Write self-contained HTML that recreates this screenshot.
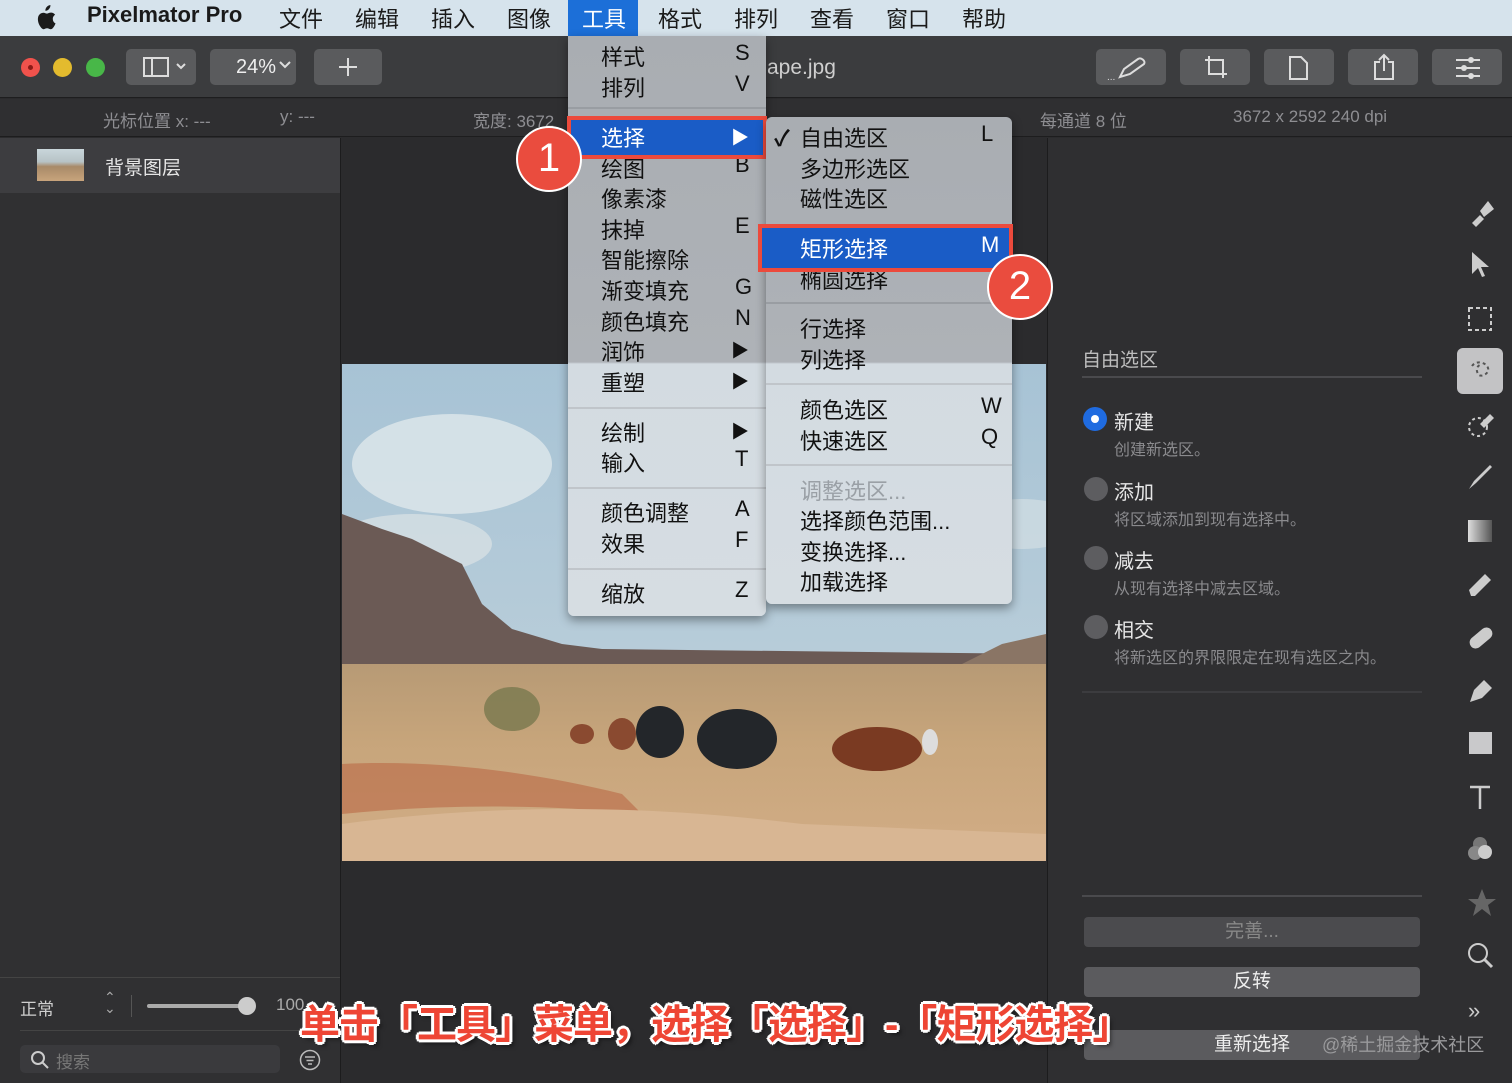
<!DOCTYPE html>
<html><head><meta charset="utf-8">
<style>
*{margin:0;padding:0;box-sizing:border-box}
body{width:1512px;height:1083px;overflow:hidden;background:#2b2b2d;font-family:"Liberation Sans","Noto Sans CJK SC",sans-serif;position:relative}
.a{position:absolute}
.t{position:absolute;white-space:nowrap}
.mb{font-size:22px;color:#1a1a1a;top:2px}
.btn{position:absolute;top:49px;height:36px;background:#5a5b5d;border-radius:5px}
.mi{position:absolute;font-size:22px;color:#111;white-space:nowrap}
.sep{position:absolute;height:2px;background:#c0c5ca}
.ti{position:absolute;left:1466px}
.rb{position:absolute;left:1084px;width:336px;height:30px;border-radius:4px;background:#5b5b5e;color:#eee;font-size:19px;text-align:center;line-height:30px}
.radio{position:absolute;left:1084px;width:24px;height:24px;border-radius:50%;background:#5d5d60}
.rl{position:absolute;left:1114px;font-size:20px;color:#e6e6e6}
.rd{position:absolute;left:1114px;font-size:16px;color:#8a8a8d}
</style></head><body>
<div class="a" style="left:0;top:0;width:1512px;height:36px;background:#d6e3ec"></div>
<svg class="a" style="left:33px;top:5px" width="24" height="26" viewBox="0 0 24 26"><path d="M16 4c1-1.2 1.6-2.6 1.4-4-1.3.1-2.8.9-3.700 2-.8.9-1.5 2.4-1.3 3.8 1.4.1 2.8-.7 3.6-1.8zM19.8 13.8c0-2.7 2.2-4 2.3-4.1-1.3-1.9-3.3-2.1-4-2.1-1.7-.2-3.3 1-4.2 1s-2.2-1-3.6-.9c-1.9 0-3.6 1.1-4.5 2.7-1.900 3.3-.5 8.3 1.4 11 .9 1.3 2 2.8 3.4 2.8 1.4-.1 1.9-.9 3.5-.9s2.1.9 3.6.9c1.5 0 2.4-1.4 3.3-2.7 1-1.5 1.5-3 1.5-3.1-.1 0-2.7-1-2.7-4.600z" fill="#1b1b1b"/></svg>
<div class="t mb" style="left:87px;font-weight:bold">Pixelmator Pro</div>
<div class="t mb" style="left:279px">文件</div>
<div class="t mb" style="left:355px">编辑</div>
<div class="t mb" style="left:431px">插入</div>
<div class="t mb" style="left:507px">图像</div>
<div class="a" style="left:568px;top:0;width:70px;height:36px;background:#1c6fd8"></div>
<div class="t mb" style="left:582px;color:#fff">工具</div>
<div class="t mb" style="left:658px">格式</div>
<div class="t mb" style="left:734px">排列</div>
<div class="t mb" style="left:810px">查看</div>
<div class="t mb" style="left:886px">窗口</div>
<div class="t mb" style="left:962px">帮助</div>
<div class="a" style="left:0;top:36px;width:1512px;height:62px;background:#3b3c3e;border-bottom:1px solid #1e1e1f"></div>
<div class="a" style="left:21px;top:58px;width:19px;height:19px;border-radius:50%;background:#f0524c"></div>
<div class="a" style="left:28px;top:65px;width:5px;height:5px;border-radius:50%;background:#8a1a16"></div>
<div class="a" style="left:53px;top:58px;width:19px;height:19px;border-radius:50%;background:#e3bb2e"></div>
<div class="a" style="left:86px;top:58px;width:19px;height:19px;border-radius:50%;background:#48b748"></div>
<div class="btn" style="left:126px;width:70px"></div>
<svg class="a" style="left:143px;top:57px" width="46" height="20"><rect x="1" y="1" width="24" height="18" fill="none" stroke="#ddd" stroke-width="2"/><line x1="9" y1="1" x2="9" y2="19" stroke="#ddd" stroke-width="2"/><path d="M34 7l4 4 4-4" fill="none" stroke="#ddd" stroke-width="2"/></svg>
<div class="btn" style="left:210px;width:86px"></div>
<div class="t" style="left:236px;top:56px;font-size:20px;color:#eee">24%</div>
<svg class="a" style="left:278px;top:60px" width="14" height="10"><path d="M2 2l5 5 5-5" fill="none" stroke="#ddd" stroke-width="2"/></svg>
<div class="btn" style="left:314px;width:68px"></div>
<svg class="a" style="left:338px;top:57px" width="20" height="20"><path d="M10 1v18M1 10h18" stroke="#ddd" stroke-width="2"/></svg>
<div class="t" style="left:767px;top:56px;font-size:21px;color:#cfcfcf">ape.jpg</div>
<div class="btn" style="left:1096px;width:70px"></div>
<svg class="a" style="left:1106px;top:53px" width="50" height="30"><path d="M14 24l4-8 14-10c3-2 8 2 6 5L24 21z" fill="none" stroke="#ddd" stroke-width="2"/><text x="1" y="27" fill="#ddd" font-size="10">...</text></svg>
<div class="btn" style="left:1180px;width:70px"></div>
<svg class="a" style="left:1200px;top:54px" width="30" height="28"><path d="M5 6h18v18M9 2v18h18" fill="none" stroke="#ddd" stroke-width="2"/></svg>
<div class="btn" style="left:1264px;width:70px"></div>
<svg class="a" style="left:1288px;top:55px" width="22" height="26"><path d="M2 2h11l6 6v16H2z" fill="none" stroke="#ddd" stroke-width="2"/></svg>
<div class="btn" style="left:1348px;width:70px"></div>
<svg class="a" style="left:1372px;top:52px" width="24" height="30"><path d="M8 10H3v17h18V10h-5M12 3v16M7 8l5-5 5 5" fill="none" stroke="#ddd" stroke-width="2"/></svg>
<div class="btn" style="left:1432px;width:70px"></div>
<svg class="a" style="left:1455px;top:56px" width="26" height="24"><path d="M1 4h24M1 12h24M1 20h24" stroke="#ddd" stroke-width="2"/><circle cx="16" cy="4" r="3" fill="#ddd"/><circle cx="9" cy="12" r="3" fill="#ddd"/><circle cx="16" cy="20" r="3" fill="#ddd"/></svg>
<div class="a" style="left:0;top:99px;width:1512px;height:38px;background:#2f2f31;border-bottom:1px solid #1d1d1e"></div>
<div class="t" style="left:103px;top:107px;font-size:17px;color:#8e8e92">光标位置 x: ---</div>
<div class="t" style="left:280px;top:107px;font-size:17px;color:#8e8e92">y: ---</div>
<div class="t" style="left:473px;top:107px;font-size:17px;color:#8e8e92">宽度: 3672</div>
<div class="t" style="left:1040px;top:107px;font-size:17px;color:#8e8e92">每通道 8 位</div>
<div class="t" style="left:1233px;top:107px;font-size:17px;color:#8e8e92">3672 x 2592 240 dpi</div>
<div class="a" style="left:0;top:138px;width:341px;height:945px;background:#303032;border-right:1px solid #1c1c1d"></div>
<div class="a" style="left:0;top:138px;width:340px;height:55px;background:#3d3d40"></div>
<div class="a" style="left:37px;top:149px;width:47px;height:32px;background:linear-gradient(#c9d6db 0,#b7c3c6 40%,#a88a68 55%,#c8a47c 100%)"></div>
<div class="t" style="left:105px;top:153px;font-size:19px;color:#e6e6e6">背景图层</div>
<div class="a" style="left:0;top:977px;width:340px;height:1px;background:#444"></div>
<div class="t" style="left:20px;top:995px;font-size:17px;color:#cfcfcf">正常</div>
<div class="t" style="left:104px;top:992px;font-size:14px;color:#aaa;line-height:11px">⌃<br>⌄</div>
<div class="a" style="left:131px;top:995px;width:1px;height:22px;background:#555"></div>
<div class="a" style="left:147px;top:1004px;width:100px;height:4px;border-radius:2px;background:#aaa"></div>
<div class="a" style="left:238px;top:997px;width:18px;height:18px;border-radius:50%;background:#ccc"></div>
<div class="t" style="left:276px;top:995px;font-size:17px;color:#aaa">100</div>
<div class="a" style="left:20px;top:1030px;width:320px;height:1px;background:#444"></div>
<div class="a" style="left:20px;top:1045px;width:260px;height:28px;border-radius:5px;background:#3a3a3d"></div>
<svg class="a" style="left:30px;top:1050px" width="20" height="20"><circle cx="8" cy="8" r="6" fill="none" stroke="#ccc" stroke-width="2"/><path d="M12 12l6 6" stroke="#ccc" stroke-width="2"/></svg>
<div class="t" style="left:56px;top:1048px;font-size:17px;color:#777">搜索</div>
<svg class="a" style="left:299px;top:1049px" width="22" height="22"><circle cx="11" cy="11" r="9.5" fill="none" stroke="#bbb" stroke-width="1.5"/><path d="M6 8h10M7.5 11.5h7M9 15h4" stroke="#bbb" stroke-width="1.5"/></svg>
<!-- canvas image -->
<div class="a" style="left:342px;top:364px;width:704px;height:497px;overflow:hidden">
<svg width="704" height="497">
<defs>
<linearGradient id="sky" x1="0" y1="0" x2="0" y2="1"><stop offset="0" stop-color="#a7c3d5"/><stop offset="1" stop-color="#c3d3dc"/></linearGradient>
<linearGradient id="gr" x1="0" y1="0" x2="0" y2="1"><stop offset="0" stop-color="#b79a75"/><stop offset=".4" stop-color="#c7a57b"/><stop offset="1" stop-color="#d2ad86"/></linearGradient>
</defs>
<rect width="704" height="497" fill="url(#sky)"/>
<ellipse cx="110" cy="100" rx="100" ry="50" fill="#e2e9ec" opacity=".75"/>
<ellipse cx="70" cy="180" rx="80" ry="30" fill="#dbe3e6" opacity=".7"/>
<ellipse cx="680" cy="160" rx="60" ry="25" fill="#d9e2e6" opacity=".6"/>
<path d="M0 150 L40 165 L70 175 L100 190 L120 200 L140 240 L170 265 L220 280 L260 285 L704 290 L704 320 L0 320Z" fill="#6b5a55"/>
<path d="M620 300 L660 280 L704 270 L704 320 L600 320Z" fill="#8a7565"/>
<rect x="0" y="300" width="704" height="197" fill="url(#gr)"/>
<path d="M0 400 C100 395 200 410 280 430 L300 450 C200 440 100 440 0 450Z" fill="#b8623f" opacity=".55"/>
<path d="M0 460 C150 440 300 440 460 460 L704 470 L704 497 L0 497Z" fill="#d8b693"/>
<ellipse cx="170" cy="345" rx="28" ry="22" fill="#7d7a50" opacity=".85"/>
<ellipse cx="240" cy="370" rx="12" ry="10" fill="#8a4a30"/>
<ellipse cx="280" cy="370" rx="14" ry="16" fill="#8a4a30"/>
<ellipse cx="318" cy="368" rx="24" ry="26" fill="#23262a"/>
<ellipse cx="395" cy="375" rx="40" ry="30" fill="#23262a"/>
<ellipse cx="535" cy="385" rx="45" ry="22" fill="#7a3a22"/>
<ellipse cx="588" cy="378" rx="8" ry="13" fill="#ddd"/>
</svg></div>
<!-- right panel -->
<div class="a" style="left:1047px;top:138px;width:465px;height:945px;background:#2f2f31;border-left:1px solid #1c1c1d"></div>
<div class="t" style="left:1082px;top:345px;font-size:19px;color:#bdbdbd">自由选区</div>
<div class="a" style="left:1082px;top:376px;width:340px;height:2px;background:#4a4a4d"></div>
<div class="radio" style="left:1083px;top:407px;background:#1f6be0"></div>
<div class="a" style="left:1091px;top:415px;width:8px;height:8px;border-radius:50%;background:#fff"></div>
<div class="rl" style="top:406px">新建</div>
<div class="rd" style="top:436px">创建新选区。</div>
<div class="radio" style="top:477px"></div>
<div class="rl" style="top:476px">添加</div>
<div class="rd" style="top:506px">将区域添加到现有选择中。</div>
<div class="radio" style="top:546px"></div>
<div class="rl" style="top:545px">减去</div>
<div class="rd" style="top:575px">从现有选择中减去区域。</div>
<div class="radio" style="top:615px"></div>
<div class="rl" style="top:614px">相交</div>
<div class="rd" style="top:644px">将新选区的界限限定在现有选区之内。</div>
<div class="a" style="left:1082px;top:691px;width:340px;height:2px;background:#3c3c3f"></div>
<div class="a" style="left:1082px;top:895px;width:340px;height:2px;background:#4a4a4d"></div>
<div class="rb" style="top:917px;background:#4b4b4e;color:#888">完善...</div>
<div class="rb" style="top:967px">反转</div>
<div class="rb" style="top:1030px">重新选择</div>
<div class="t" style="left:1322px;top:1031px;font-size:18px;color:#9a9a9c">@稀土掘金技术社区</div>
<!-- tools -->
<svg class="ti" style="top:197px" width="30" height="30"><path d="M6 26l8-8 4 4-8 8zM14 14l8-10 6 8-10 8z" fill="#ccc"/></svg>
<svg class="ti" style="top:250px" width="30" height="30"><path d="M6 2v22l6-6 4 9 3-1-4-9h8z" fill="#ccc"/></svg>
<svg class="ti" style="top:305px" width="30" height="30"><rect x="3" y="3" width="22" height="22" fill="none" stroke="#ccc" stroke-width="2" stroke-dasharray="4 3"/></svg>
<div class="a" style="left:1457px;top:348px;width:46px;height:46px;border-radius:6px;background:#c3c3c5"></div>
<svg class="ti" style="top:356px" width="30" height="30"><path d="M6 10c4-6 14-4 16 2s-8 10-10 6-2-8 4-10" fill="none" stroke="#555" stroke-width="2" stroke-dasharray="3 3"/></svg>
<svg class="ti" style="top:410px" width="30" height="30"><circle cx="12" cy="17" r="9" fill="none" stroke="#ccc" stroke-width="2" stroke-dasharray="3 3"/><path d="M14 14l10-10 4 4-10 10z" fill="#ccc"/></svg>
<svg class="ti" style="top:463px" width="30" height="30"><path d="M3 26l5-8 16-16 2 2-16 16z" fill="#ccc"/></svg>
<div class="a" style="left:1468px;top:520px;width:24px;height:22px;background:linear-gradient(90deg,#ddd,#555)"></div>
<svg class="ti" style="top:570px" width="30" height="30"><path d="M3 20l16-16 6 6-16 16H5z" fill="#ccc"/></svg>
<svg class="ti" style="top:623px" width="30" height="30"><rect x="2" y="9" width="26" height="12" rx="6" transform="rotate(-40 15 15)" fill="#ccc"/></svg>
<svg class="ti" style="top:676px" width="30" height="30"><path d="M4 26l4-12 10-10 8 8-10 10z" fill="#ccc"/></svg>
<div class="a" style="left:1469px;top:732px;width:23px;height:22px;background:#c9c9cb"></div>
<svg class="ti" style="top:783px" width="30" height="30"><path d="M4 4h20M14 4v22" stroke="#ccc" stroke-width="2.5"/></svg>
<svg class="ti" style="top:835px" width="32" height="32"><circle cx="14" cy="9" r="7" fill="#777"/><circle cx="9" cy="18" r="7" fill="#888"/><circle cx="19" cy="17" r="7" fill="#ccc"/></svg>
<svg class="ti" style="top:887px" width="32" height="32"><path d="M16 2l4 10h10l-8 6 3 11-9-7-9 7 3-11-8-6h10z" fill="#666"/></svg>
<svg class="ti" style="top:941px" width="30" height="30"><circle cx="12" cy="12" r="9" fill="none" stroke="#ccc" stroke-width="2"/><path d="M18 18l8 8" stroke="#ccc" stroke-width="3"/></svg>
<div class="t" style="left:1468px;top:998px;font-size:22px;color:#ccc">»</div>
<!-- menu 1 -->
<div class="a" style="left:568px;top:36px;width:198px;height:580px;border-radius:0 0 6px 6px;background:linear-gradient(#a9adb2 0,#aeb2b7 326px,#d3dbe1 328px,#d6dde2 100%);box-shadow:0 4px 10px rgba(0,0,0,.4)"></div>
<div class="mi" style="left:601px;top:40px">样式</div><div class="mi" style="left:735px;top:40px">S</div>
<div class="mi" style="left:601px;top:71px">排列</div><div class="mi" style="left:735px;top:71px">V</div>
<div class="sep" style="left:568px;top:107px;width:198px;background:#999da2"></div>
<div class="mi" style="left:601px;top:152px">绘图</div><div class="mi" style="left:735px;top:152px">B</div>
<div class="mi" style="left:601px;top:182px">像素漆</div>
<div class="mi" style="left:601px;top:213px">抹掉</div><div class="mi" style="left:735px;top:213px">E</div>
<div class="mi" style="left:601px;top:243px">智能擦除</div>
<div class="mi" style="left:601px;top:274px">渐变填充</div><div class="mi" style="left:735px;top:274px">G</div>
<div class="mi" style="left:601px;top:305px">颜色填充</div><div class="mi" style="left:735px;top:305px">N</div>
<div class="mi" style="left:601px;top:335px">润饰</div><div class="mi" style="left:731px;top:337px;font-size:18px">▶</div>
<div class="mi" style="left:601px;top:366px">重塑</div><div class="mi" style="left:731px;top:368px;font-size:18px">▶</div>
<div class="sep" style="left:568px;top:407px;width:198px"></div>
<div class="mi" style="left:601px;top:416px">绘制</div><div class="mi" style="left:731px;top:418px;font-size:18px">▶</div>
<div class="mi" style="left:601px;top:446px">输入</div><div class="mi" style="left:735px;top:446px">T</div>
<div class="sep" style="left:568px;top:487px;width:198px"></div>
<div class="mi" style="left:601px;top:496px">颜色调整</div><div class="mi" style="left:735px;top:496px">A</div>
<div class="mi" style="left:601px;top:527px">效果</div><div class="mi" style="left:735px;top:527px">F</div>
<div class="sep" style="left:568px;top:568px;width:198px"></div>
<div class="mi" style="left:601px;top:577px">缩放</div><div class="mi" style="left:735px;top:577px">Z</div>
<div class="a" style="left:567px;top:116px;width:200px;height:43px;border:4px solid #ec4a3c;background:#1a5cc6"></div>
<div class="mi" style="left:601px;top:121px;color:#fff">选择</div><div class="mi" style="left:731px;top:124px;font-size:18px;color:#fff">▶</div>
<!-- submenu -->
<div class="a" style="left:766px;top:117px;width:246px;height:487px;border-radius:6px;background:linear-gradient(#a9adb2 0,#aeb2b7 245px,#d3dbe1 247px,#d6dde2 100%);box-shadow:0 4px 10px rgba(0,0,0,.4)"></div>
<div class="mi" style="left:774px;top:121px;font-weight:bold">✓</div>
<div class="mi" style="left:800px;top:121px">自由选区</div><div class="mi" style="left:981px;top:121px">L</div>
<div class="mi" style="left:800px;top:152px">多边形选区</div>
<div class="mi" style="left:800px;top:182px">磁性选区</div>
<div class="mi" style="left:800px;top:263px">椭圆选择</div>
<div class="sep" style="left:766px;top:302px;width:246px;background:#999da2"></div>
<div class="mi" style="left:800px;top:312px">行选择</div>
<div class="mi" style="left:800px;top:343px">列选择</div>
<div class="sep" style="left:766px;top:383px;width:246px"></div>
<div class="mi" style="left:800px;top:393px">颜色选区</div><div class="mi" style="left:981px;top:393px">W</div>
<div class="mi" style="left:800px;top:424px">快速选区</div><div class="mi" style="left:981px;top:424px">Q</div>
<div class="sep" style="left:766px;top:464px;width:246px"></div>
<div class="mi" style="left:800px;top:474px;color:#9aa0a6">调整选区...</div>
<div class="mi" style="left:800px;top:504px">选择颜色范围...</div>
<div class="mi" style="left:800px;top:535px">变换选择...</div>
<div class="mi" style="left:800px;top:565px">加载选择</div>
<div class="a" style="left:758px;top:224px;width:255px;height:48px;border:4px solid #ec4a3c;background:#1a5cc6"></div>
<div class="mi" style="left:800px;top:232px;color:#fff">矩形选择</div><div class="mi" style="left:981px;top:232px;color:#fff">M</div>
<div class="a" style="left:516px;top:126px;width:66px;height:66px;border-radius:50%;background:#ea4c3e;border:2px solid #fff;color:#fff;font-size:40px;text-align:center;line-height:60px">1</div>
<div class="a" style="left:987px;top:254px;width:66px;height:66px;border-radius:50%;background:#ea4c3e;border:2px solid #fff;color:#fff;font-size:40px;text-align:center;line-height:60px">2</div>
<div class="t" style="left:300px;top:992px;font-size:40px;font-weight:bold;color:#ee4534;letter-spacing:-1px;text-shadow:3px 0 #fff,-3px 0 #fff,0 3px #fff,0 -3px #fff,2px 2px #fff,-2px -2px #fff,2px -2px #fff,-2px 2px #fff,4px 4px 4px rgba(0,0,0,.5)">单击「工具」菜单，选择「选择」-「矩形选择」</div>
</body></html>
